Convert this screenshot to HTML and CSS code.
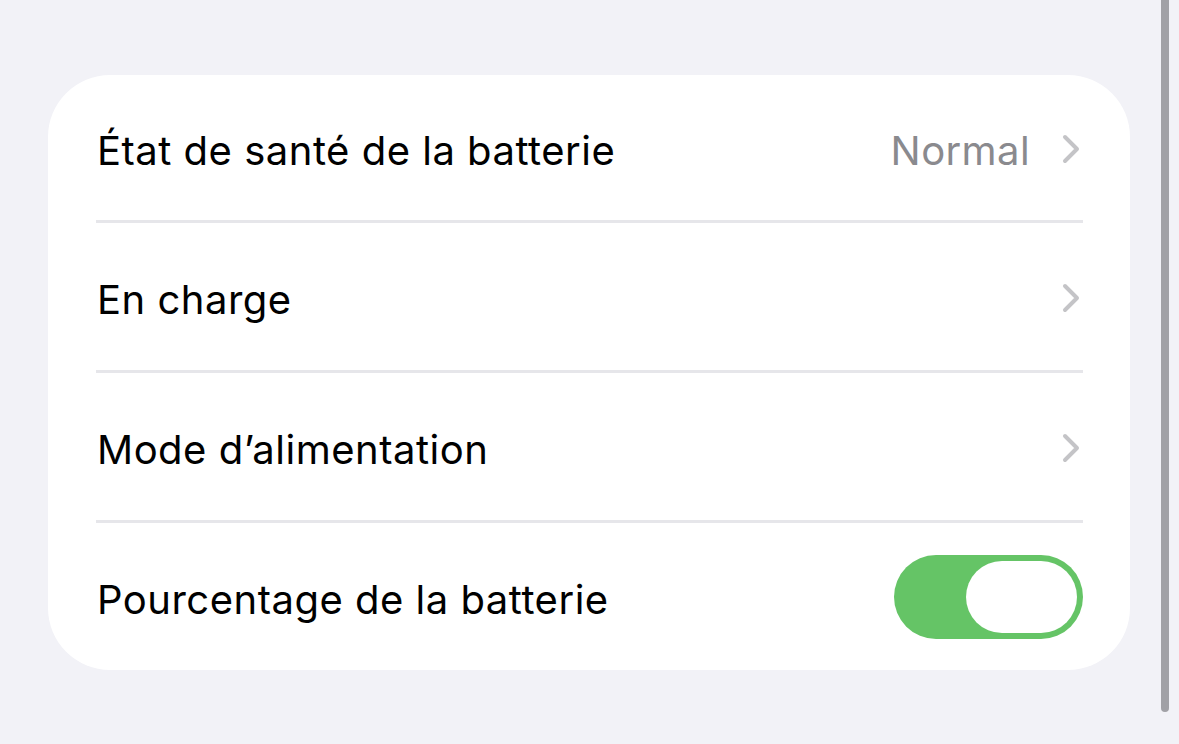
FILE: index.html
```html
<!DOCTYPE html>
<html lang="fr">
<head>
    <meta charset="UTF-8">
    <meta name="viewport" content="width=device-width, initial-scale=1.0">
    <title>Batterie</title>
    <link rel="stylesheet" href="styles.css">
</head>
<body>
    <div class="page">
        <div class="card">
            <div class="row">
                <span class="label">État de santé de la batterie</span>
                <div class="detail">
                    <span class="value">Normal</span>
                    <svg class="chevron" viewBox="0 0 18 30" fill="none" stroke="currentColor" stroke-width="4" stroke-linecap="round" stroke-linejoin="round">
                        <polyline points="3 3 15 15 3 27"></polyline>
                    </svg>
                </div>
            </div>
            <div class="row">
                <span class="label">En charge</span>
                <div class="detail">
                    <svg class="chevron" viewBox="0 0 18 30" fill="none" stroke="currentColor" stroke-width="4" stroke-linecap="round" stroke-linejoin="round">
                        <polyline points="3 3 15 15 3 27"></polyline>
                    </svg>
                </div>
            </div>
            <div class="row">
                <span class="label">Mode d’alimentation</span>
                <div class="detail">
                    <svg class="chevron" viewBox="0 0 18 30" fill="none" stroke="currentColor" stroke-width="4" stroke-linecap="round" stroke-linejoin="round">
                        <polyline points="3 3 15 15 3 27"></polyline>
                    </svg>
                </div>
            </div>
            <div class="row">
                <span class="label">Pourcentage de la batterie</span>
                <div class="toggle on">
                    <div class="knob"></div>
                </div>
            </div>
        </div>
    </div>
    <div class="scroll-indicator"></div>
</body>
</html>
```

FILE: styles.css
```css
:root {
    --bg: #f2f2f7;
    --card: #ffffff;
    --text: #000000;
    --secondary: #8a8a8e;
    --chevron: #c4c4c7;
    --separator: #e6e6ea;
    --green: #65c466;
    --scroll: #a1a1a6;
}

* {
    margin: 0;
    padding: 0;
    box-sizing: border-box;
}

body {
    font-family: Inter, "Liberation Sans", sans-serif;
    background-color: var(--bg);
    color: var(--text);
    min-height: 100vh;
    overflow: hidden;
}

.page {
    padding: 75px 49px 0 48px;
}

.card {
    background-color: var(--card);
    border-radius: 62px;
    padding: 0 47px 0 48px;
    width: 1082px;
}

.row {
    display: flex;
    align-items: center;
    justify-content: space-between;
    height: 150px;
    padding-left: 1px;
    border-bottom: 3px solid var(--separator);
}

.row:first-child {
    height: 148px;
}

.row:last-child {
    border-bottom: none;
    height: 147px;
}

.label {
    font-size: 40px;
    letter-spacing: 0.5px;
    padding-top: 6px;
}

.detail {
    display: flex;
    align-items: center;
    gap: 32px;
    padding-right: 3px;
}

.value {
    font-size: 40px;
    letter-spacing: 0.4px;
    color: var(--secondary);
    padding-top: 6px;
}

.chevron {
    width: 18px;
    height: 30px;
    color: var(--chevron);
    margin-top: 2px;
}

.toggle {
    width: 189px;
    height: 84px;
    border-radius: 42px;
    background-color: #e9e9eb;
    padding: 6px;
    display: flex;
}

.toggle.on {
    background-color: var(--green);
    justify-content: flex-end;
}

.knob {
    width: 111px;
    height: 72px;
    border-radius: 36px;
    background-color: #ffffff;
}

.scroll-indicator {
    position: fixed;
    top: -10px;
    left: 1161px;
    width: 8px;
    height: 722px;
    border-radius: 4px;
    background-color: var(--scroll);
}
```
